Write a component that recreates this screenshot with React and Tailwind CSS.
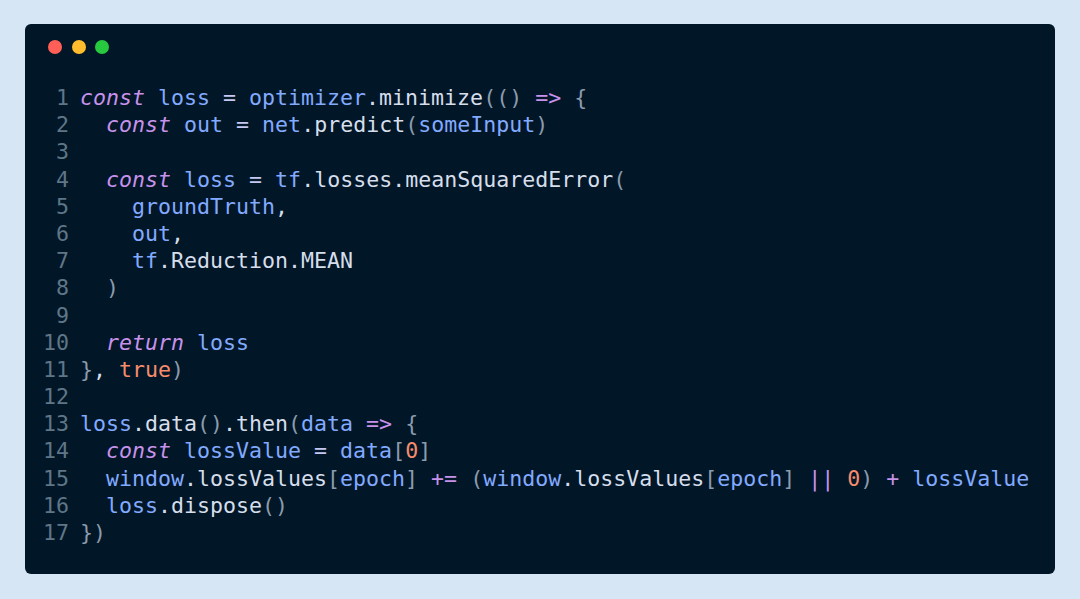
import React from "react";

const C = {
  kw: "text-[#c792ea] italic",
  id: "text-[#82aaff]",
  pl: "text-[#d6deeb]",
  pu: "text-[#8b9bad]",
  op: "text-[#c792ea]",
  eq: "text-[#c5c8f2]",
  num: "text-[#f78c6c]",
};

const lines = [
  [["const", "kw"], [" "], ["loss", "id"], [" "], ["=", "eq"], [" "], ["optimizer", "id"], [".minimize", "pl"], ["(()", "pu"], [" "], ["=>", "op"], [" "], ["{", "pu"]],
  [["  "], ["const", "kw"], [" "], ["out", "id"], [" "], ["=", "eq"], [" "], ["net", "id"], [".predict", "pl"], ["(", "pu"], ["someInput", "id"], [")", "pu"]],
  [],
  [["  "], ["const", "kw"], [" "], ["loss", "id"], [" "], ["=", "eq"], [" "], ["tf", "id"], [".losses.meanSquaredError", "pl"], ["(", "pu"]],
  [["    "], ["groundTruth", "id"], [",", "pl"]],
  [["    "], ["out", "id"], [",", "pl"]],
  [["    "], ["tf", "id"], [".Reduction.MEAN", "pl"]],
  [["  "], [")", "pu"]],
  [],
  [["  "], ["return", "kw"], [" "], ["loss", "id"]],
  [["}", "pu"], [",", "pl"], [" "], ["true", "num"], [")", "pu"]],
  [],
  [["loss", "id"], [".data", "pl"], ["()", "pu"], [".then", "pl"], ["(", "pu"], ["data", "id"], [" "], ["=>", "op"], [" "], ["{", "pu"]],
  [["  "], ["const", "kw"], [" "], ["lossValue", "id"], [" "], ["=", "eq"], [" "], ["data", "id"], ["[", "pu"], ["0", "num"], ["]", "pu"]],
  [["  "], ["window", "id"], [".lossValues", "pl"], ["[", "pu"], ["epoch", "id"], ["]", "pu"], [" "], ["+=", "op"], [" "], ["(", "pu"], ["window", "id"], [".lossValues", "pl"], ["[", "pu"], ["epoch", "id"], ["]", "pu"], [" "], ["||", "op"], [" "], ["0", "num"], [")", "pu"], [" "], ["+", "op"], [" "], ["lossValue", "id"]],
  [["  "], ["loss", "id"], [".dispose", "pl"], ["()", "pu"]],
  [["})", "pu"]],
];

export default function App() {
  return (
    <div className="w-[1080px] h-[599px] bg-[#d6e6f5] pt-[24px] pl-[25px]">
      <div className="w-[1030px] h-[550px] bg-[#011627] rounded-[6px] pt-[16px] pl-[22px]">
        <div className="flex gap-[9.5px] pl-[1px]">
          <span className="w-[14px] h-[14px] rounded-full bg-[#ff5f56]" />
          <span className="w-[14px] h-[14px] rounded-full bg-[#ffbd2e]" />
          <span className="w-[14px] h-[14px] rounded-full bg-[#27c93f]" />
        </div>
        <div
          className="mt-[30px] text-[21.6px] leading-[27.2px] whitespace-pre"
          style={{ fontFamily: '"DejaVu Sans Mono", monospace' }}
        >
          {lines.map((toks, i) => (
            <div key={i} className="flex h-[27.2px]">
              <span className="w-[26px] text-right text-[#5f7687] ml-[-4px]">{i + 1}</span>
              <span className="ml-[11px]">
                {toks.map(([t, k], j) => (
                  <span key={j} className={k ? C[k] : ""}>{t}</span>
                ))}
              </span>
            </div>
          ))}
        </div>
      </div>
    </div>
  );
}
